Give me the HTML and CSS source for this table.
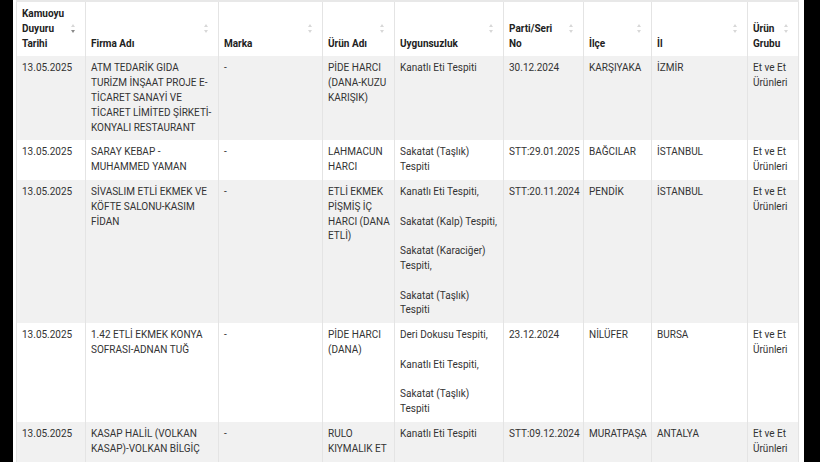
FILE: index.html
```html
<!DOCTYPE html>
<html lang="tr">
<head>
<meta charset="utf-8">
<link rel="stylesheet" href="styles.css">
</head>
<body>
<div class="frame">
<table class="grid">
<colgroup>
<col style="width:69px"><col style="width:133px"><col style="width:104px"><col style="width:72px"><col style="width:109px"><col style="width:80px"><col style="width:68px"><col style="width:96px"><col style="width:51px">
</colgroup>
<thead>
<tr>
<th>Kamuoyu Duyuru Tarihi<span class="sort desc"></span></th>
<th>Firma Adı<span class="sort"></span></th>
<th>Marka<span class="sort"></span></th>
<th>Ürün Adı<span class="sort"></span></th>
<th>Uygunsuzluk<span class="sort"></span></th>
<th>Parti/Seri No<span class="sort"></span></th>
<th>İlçe<span class="sort"></span></th>
<th>İl<span class="sort"></span></th>
<th>Ürün Grubu<span class="sort"></span></th>
</tr>
</thead>
<tbody>
<tr class="odd">
<td>13.05.2025</td>
<td>ATM TEDARİK GIDA TURİZM İNŞAAT PROJE E-TİCARET SANAYİ VE TİCARET LİMİTED ŞİRKETİ-KONYALI RESTAURANT</td>
<td>-</td>
<td>PİDE HARCI (DANA-KUZU KARIŞIK)</td>
<td>Kanatlı Eti Tespiti</td>
<td>30.12.2024</td>
<td>KARŞIYAKA</td>
<td>İZMİR</td>
<td>Et ve Et Ürünleri</td>
</tr>
<tr>
<td>13.05.2025</td>
<td>SARAY KEBAP - MUHAMMED YAMAN</td>
<td>-</td>
<td>LAHMACUN HARCI</td>
<td>Sakatat (Taşlık) Tespiti</td>
<td>STT:29.01.2025</td>
<td>BAĞCILAR</td>
<td>İSTANBUL</td>
<td>Et ve Et Ürünleri</td>
</tr>
<tr class="odd">
<td>13.05.2025</td>
<td>SİVASLIM ETLİ EKMEK VE KÖFTE SALONU-KASIM FİDAN</td>
<td>-</td>
<td>ETLİ EKMEK PİŞMİŞ İÇ HARCI (DANA ETLİ)</td>
<td>Kanatlı Eti Tespiti,<br><br>Sakatat (Kalp) Tespiti,<br><br>Sakatat (Karaciğer) Tespiti,<br><br>Sakatat (Taşlık) Tespiti</td>
<td>STT:20.11.2024</td>
<td>PENDİK</td>
<td>İSTANBUL</td>
<td>Et ve Et Ürünleri</td>
</tr>
<tr>
<td>13.05.2025</td>
<td>1.42 ETLİ EKMEK KONYA SOFRASI-ADNAN TUĞ</td>
<td>-</td>
<td>PİDE HARCI (DANA)</td>
<td>Deri Dokusu Tespiti,<br><br>Kanatlı Eti Tespiti,<br><br>Sakatat (Taşlık) Tespiti</td>
<td>23.12.2024</td>
<td>NİLÜFER</td>
<td>BURSA</td>
<td>Et ve Et Ürünleri</td>
</tr>
<tr class="odd">
<td>13.05.2025</td>
<td>KASAP HALİL (VOLKAN KASAP)-VOLKAN BİLGİÇ</td>
<td>-</td>
<td>RULO KIYMALIK ET</td>
<td>Kanatlı Eti Tespiti</td>
<td>STT:09.12.2024</td>
<td>MURATPAŞA</td>
<td>ANTALYA</td>
<td>Et ve Et Ürünleri</td>
</tr>
</tbody>
</table>
</div>
</body>
</html>
```
FILE: styles.css
```css
html, body {
  margin: 0;
  padding: 0;
  background: #000;
  height: 100%;
  overflow: hidden;
}
.frame {
  margin-left: 13px;
  width: 791px;
  padding: 0 6px 0 3px;
  background: #fff;
  height: 462px;
  box-sizing: border-box;
  overflow: hidden;
}
.grid {
  table-layout: fixed;
  border-collapse: collapse;
  width: 782px;
  font-family: Roboto, "Liberation Sans", sans-serif;
  font-size: 10px;
  line-height: 14.8px;
  color: #333;
  border-top: 2px solid #e8e8e8;
}
.grid th, .grid td {
  border-left: 1px solid #e4e4e4;
  border-right: 1px solid #e4e4e4;
  text-align: left;
}
.grid th {
  position: relative;
  font-weight: bold;
  color: #222;
  vertical-align: bottom;
  padding: 5px 18px 5px 5px;
  background: #fff;
}
.grid td {
  vertical-align: top;
  padding: 5px 3px 5px 5px;
  background: #fff;
}
.grid tr.odd td {
  background: #f1f1f1;
}
.sort {
  position: absolute;
  right: 9px;
  top: 50%;
  width: 5px;
  height: 9px;
  margin-top: -5px;
}
.sort::before, .sort::after {
  content: "";
  position: absolute;
  left: 0;
  width: 0;
  height: 0;
  border-left: 2.5px solid transparent;
  border-right: 2.5px solid transparent;
}
.sort::before {
  top: 0;
  border-bottom: 3.5px solid #d8d8d8;
}
.sort::after {
  bottom: 0;
  border-top: 3.5px solid #d8d8d8;
}
.sort.desc::after {
  border-top-color: #8a8a8a;
}
```
